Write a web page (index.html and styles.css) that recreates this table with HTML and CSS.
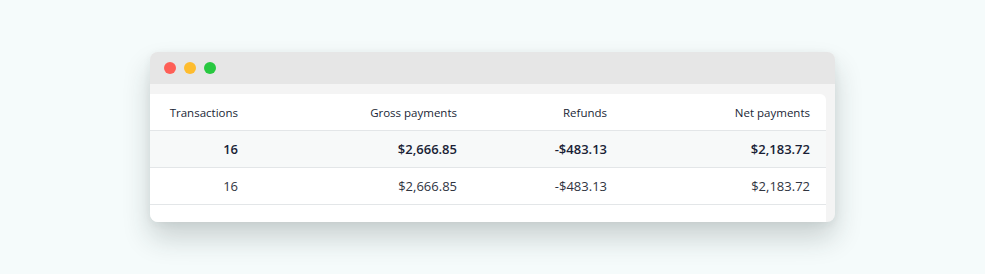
FILE: index.html
```html
<!DOCTYPE html>
<html>
<head>
<meta charset="utf-8">
<link rel="stylesheet" href="styles.css">
</head>
<body>
<div class="window">
  <div class="titlebar">
    <span class="dot red"></span>
    <span class="dot yellow"></span>
    <span class="dot green"></span>
  </div>
  <div class="content">
    <div class="card">
      <div class="row head">
        <div class="cell c1">Transactions</div>
        <div class="cell c2">Gross payments</div>
        <div class="cell c3">Refunds</div>
        <div class="cell c4">Net payments</div>
      </div>
      <div class="row total">
        <div class="cell c1">16</div>
        <div class="cell c2">$2,666.85</div>
        <div class="cell c3">-$483.13</div>
        <div class="cell c4">$2,183.72</div>
      </div>
      <div class="row">
        <div class="cell c1">16</div>
        <div class="cell c2">$2,666.85</div>
        <div class="cell c3">-$483.13</div>
        <div class="cell c4">$2,183.72</div>
      </div>
    </div>
  </div>
</div>
</body>
</html>
```
FILE: styles.css
```css
html, body {
  margin: 0;
  padding: 0;
}
body {
  background: #f5fbfb;
  height: 274px;
  display: flex;
  align-items: center;
  justify-content: center;
  font-family: "Open Sans", "Noto Sans", sans-serif;
}
.window {
  width: 685px;
  height: 170px;
  border-radius: 8px;
  background: #f4f4f4;
  overflow: hidden;
  box-shadow: 0 16px 28px rgba(30, 45, 45, 0.2), 0 2px 8px rgba(30, 45, 45, 0.06);
  display: flex;
  flex-direction: column;
}
.titlebar {
  height: 32px;
  background: #e6e6e6;
  display: flex;
  align-items: center;
  gap: 8px;
  padding-left: 14px;
  flex-shrink: 0;
}
.dot {
  width: 12px;
  height: 12px;
  border-radius: 50%;
}
.red { background: #fe5f57; }
.yellow { background: #febc2e; }
.green { background: #28c840; }
.content {
  flex: 1;
  padding: 10px 9px 0 0;
  display: flex;
}
.card {
  flex: 1;
  background: #ffffff;
  border-top-right-radius: 6px;
}
.row {
  display: grid;
  grid-template-columns: 108px 219px 150px 199px;
  height: 36px;
  border-bottom: 1px solid #e3e6e8;
  align-items: center;
  color: #30343f;
  font-size: 13px;
}
.row.head {
  color: #1a1f36;
  font-size: 11.5px;
  font-weight: 500;
}
.row.total {
  background: #f7f9f9;
  font-weight: 600;
  color: #1a1f36;
}
.cell {
  text-align: right;
  padding-right: 20px;
  white-space: nowrap;
}
.cell.c4 {
  padding-right: 16px;
}
```
